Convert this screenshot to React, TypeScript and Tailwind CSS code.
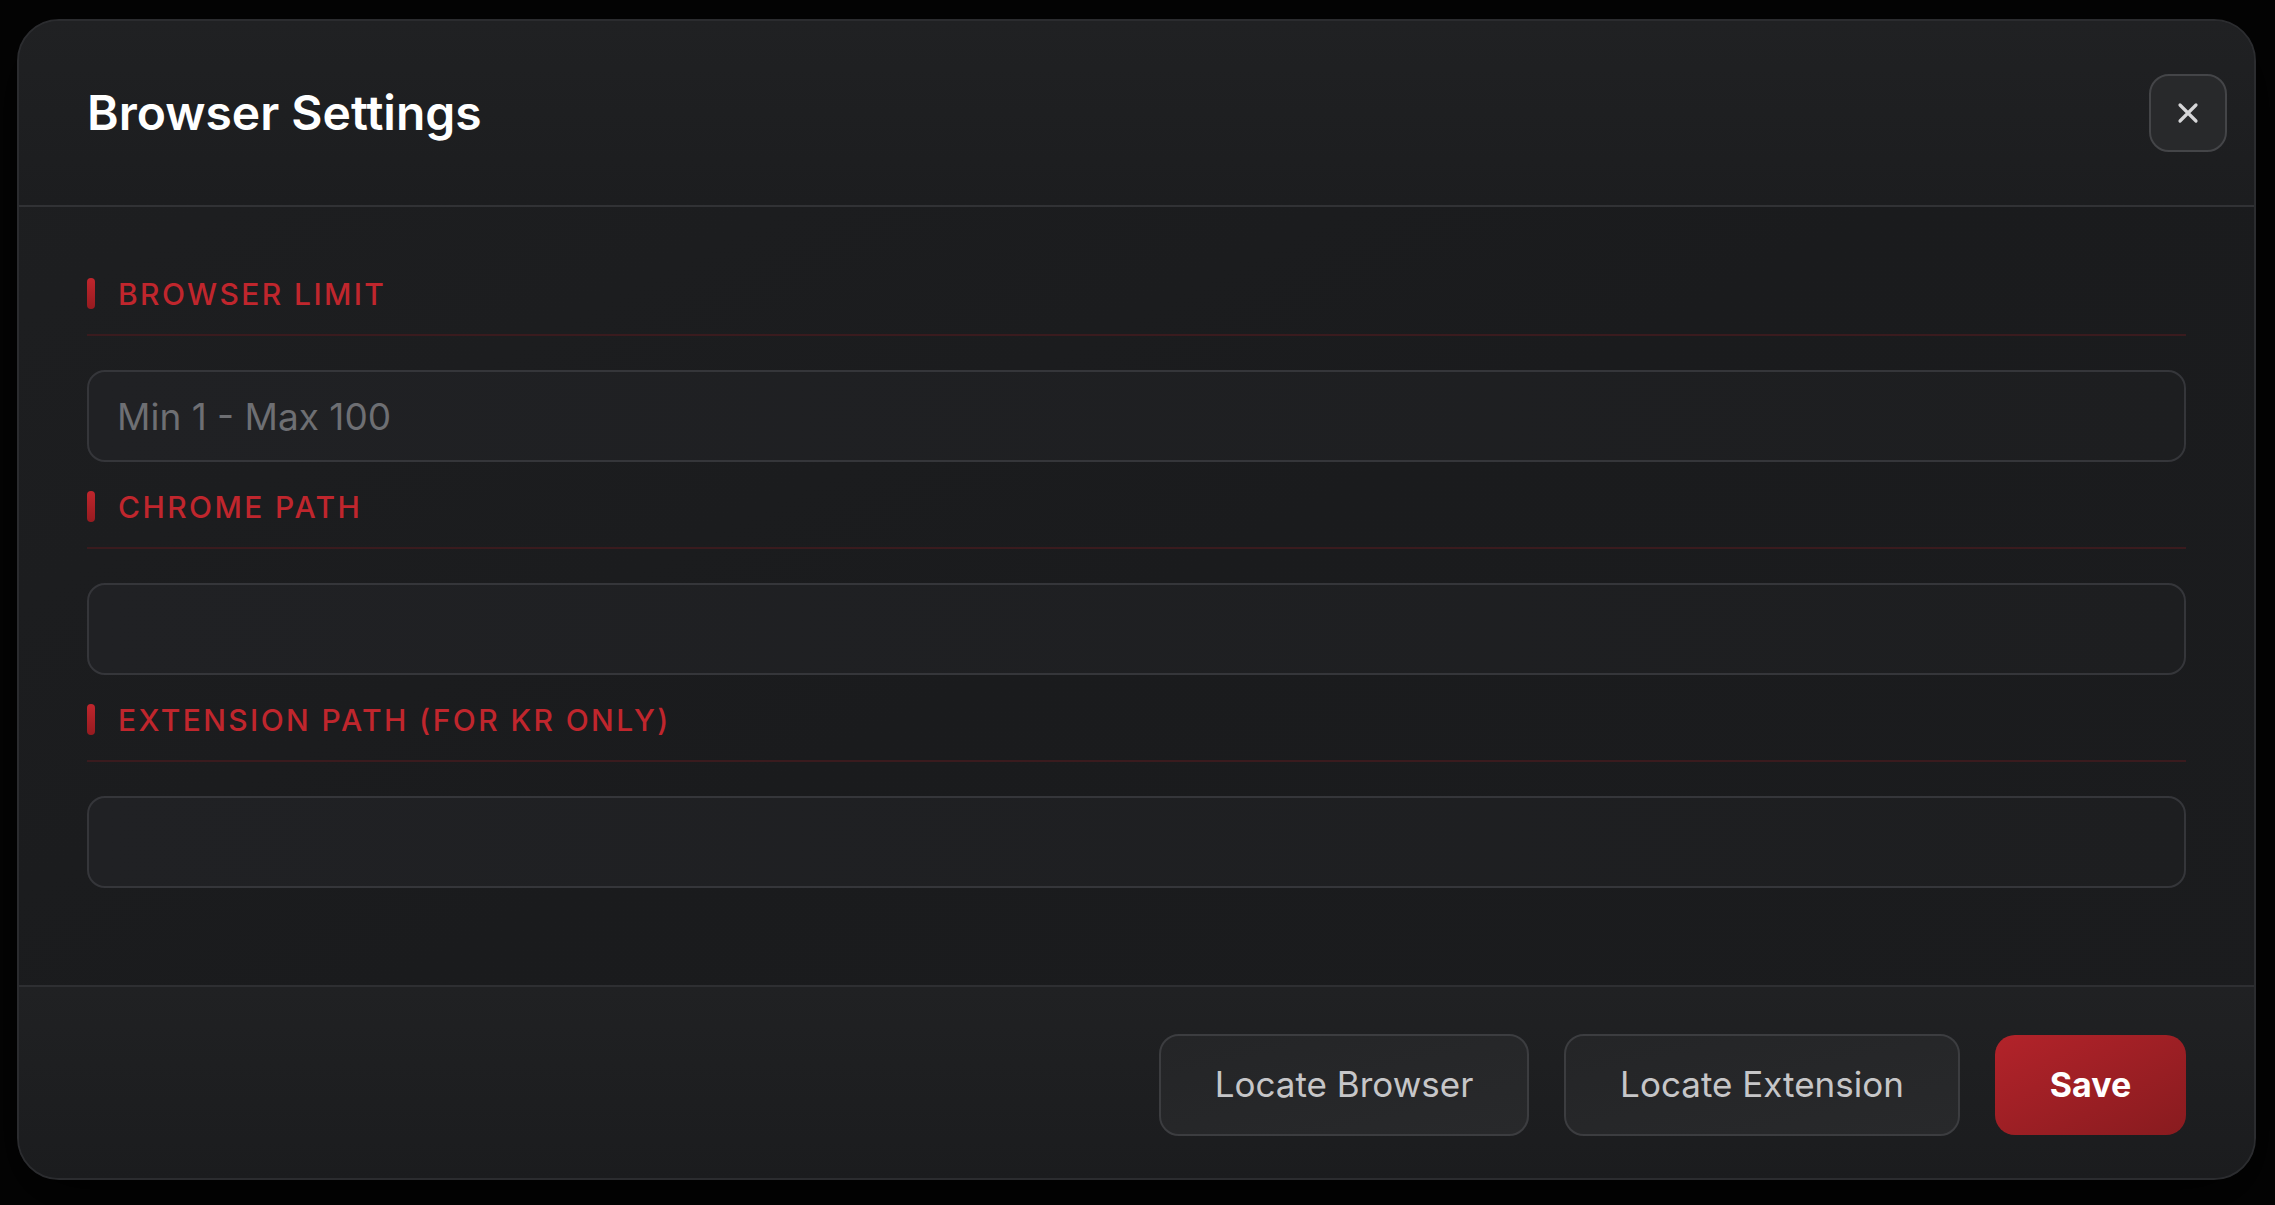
import { useState } from "react";

interface FieldProps {
  label: string;
  value: string;
  placeholder?: string;
  onChange: (v: string) => void;
}

function Field({ label, value, placeholder, onChange }: FieldProps) {
  return (
    <div className="flex flex-col">
      <div className="flex h-[31px] items-center gap-[23px]">
        <span className="h-[31px] w-[8px] rounded-full bg-gradient-to-b from-[#c0262d] to-[#961b20]" />
        <span className="text-[30px] font-medium uppercase leading-none tracking-[0.08em] text-[#c0262d]">
          {label}
        </span>
      </div>
      <div className="mt-[25px] h-[2px] w-full bg-[#3a1b1e]" />
      <input
        type="text"
        value={value}
        placeholder={placeholder}
        onChange={(e) => onChange(e.target.value)}
        className="mt-[34px] h-[92px] w-full rounded-[18px] border-2 border-[#35363a] bg-gradient-to-r from-[#202124] to-[#1d1e20] pl-[28px] text-[37px] text-[#d4d4d6] outline-none placeholder:text-[#6e6f73]"
      />
    </div>
  );
}

export default function App() {
  const [limit, setLimit] = useState("");
  const [chromePath, setChromePath] = useState("");
  const [extPath, setExtPath] = useState("");

  return (
    <div className="h-[1205px] w-[2275px] bg-[#040404] pl-[17px] pt-[19px] font-['Inter',sans-serif]">
      <div className="flex h-[1161px] w-[2239px] flex-col overflow-hidden rounded-[42px] border-2 border-[#2b2c2f] bg-gradient-to-br from-[#1e1f21] via-[#1a1b1d] to-[#1b1c1e] shadow-[0_20px_60px_rgba(0,0,0,0.8)]">
        {/* header */}
        <div className="flex h-[186px] shrink-0 items-center justify-between border-b-2 border-[#313235] bg-gradient-to-b from-[#202123] to-[#1c1d1f] pl-[68px] pr-[27px]">
          <h2 className="text-[48px] font-semibold text-white">Browser Settings</h2>
          <button className="flex h-[78px] w-[78px] items-center justify-center rounded-[20px] border-2 border-[#444548] bg-[#28292b]">
            <svg width="24" height="24" viewBox="0 0 24 24" fill="none">
              <path
                d="M4 4L20 20M20 4L4 20"
                stroke="#d6d6d8"
                strokeWidth="3.2"
                strokeLinecap="round"
              />
            </svg>
          </button>
        </div>

        {/* body */}
        <div className="flex flex-1 flex-col gap-[29px] px-[68px] pt-[71px]">
          <Field
            label="Browser Limit"
            placeholder="Min 1 - Max 100"
            value={limit}
            onChange={setLimit}
          />
          <Field label="Chrome Path" value={chromePath} onChange={setChromePath} />
          <Field
            label="Extension Path (For KR Only)"
            value={extPath}
            onChange={setExtPath}
          />
        </div>

        {/* footer */}
        <div className="flex h-[193px] shrink-0 items-center justify-end gap-[35px] border-t-2 border-[#2e2f32] bg-gradient-to-b from-[#202123] to-[#1b1c1e] px-[68px] pt-[4px]">
          <button className="h-[102px] w-[370px] rounded-[20px] border-2 border-[#3c3d40] bg-gradient-to-br from-[#242527] to-[#28292b] text-[35px] text-[#c6c6c8]">
            Locate Browser
          </button>
          <button className="h-[102px] w-[396px] rounded-[20px] border-2 border-[#3c3d40] bg-gradient-to-br from-[#242527] to-[#28292b] text-[35px] text-[#c6c6c8]">
            Locate Extension
          </button>
          <button className="h-[100px] w-[191px] rounded-[20px] bg-gradient-to-br from-[#b3232a] to-[#881b1f] text-[34px] font-bold text-white">
            Save
          </button>
        </div>
      </div>
    </div>
  );
}
